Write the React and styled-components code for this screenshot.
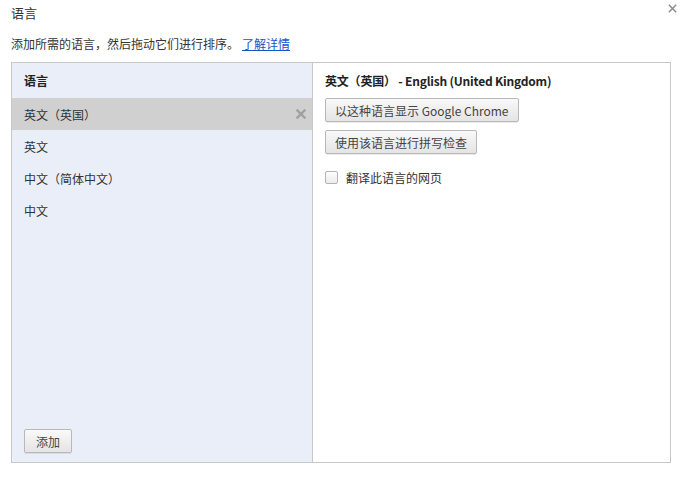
import React, { useState } from "react";
import styled, { createGlobalStyle } from "styled-components";

const GlobalStyle = createGlobalStyle`
  html, body {
    margin: 0;
    padding: 0;
    background: #ffffff;
  }
  body {
    font-family: "Noto Sans CJK SC", "Noto Sans", sans-serif;
    font-size: 12px;
    color: #333333;
  }
`;

const Page = styled.div`
  position: relative;
  width: 681px;
  height: 479px;
  box-sizing: border-box;
  padding: 0 11px;
`;

const Title = styled.div`
  font-size: 13px;
  line-height: 14px;
  padding-top: 6px;
  color: #333333;
`;

const CloseBtn = styled.div`
  position: absolute;
  top: -1px;
  right: 4px;
  width: 9px;
  height: 9px;
`;

const Desc = styled.div`
  margin-top: 17px;
  line-height: 14px;
  color: #333333;
`;

const Link = styled.a`
  color: #1155cc;
  text-decoration: underline;
  margin-left: 3px;
  cursor: pointer;
`;

const Box = styled.div`
  margin-top: 11px;
  width: 660px;
  height: 401px;
  box-sizing: border-box;
  border: 1px solid #c8c8c8;
  display: flex;
`;

const ListPane = styled.div`
  width: 301px;
  box-sizing: border-box;
  border-right: 1px solid #c8c8c8;
  background: #eaeef9;
  display: flex;
  flex-direction: column;
`;

const ListHead = styled.div`
  height: 35px;
  display: flex;
  align-items: center;
  padding-left: 12px;
  font-weight: bold;
  color: #222222;
`;

const Row = styled.div`
  height: 32px;
  display: flex;
  align-items: center;
  justify-content: space-between;
  padding: 0 6px 0 12px;
  background: ${(p) => (p.$selected ? "#d0d0d0" : "transparent")};
  color: #333333;
`;

const Remove = styled.span`
  width: 10px;
  height: 10px;
  display: flex;
`;

const Spacer = styled.div`
  flex: 1;
`;

const Button = styled.button`
  font-family: inherit;
  font-size: 12px;
  color: #444444;
  height: 24px;
  padding: 0 9px;
  border: 1px solid #b8b8b8;
  border-radius: 2px;
  background: linear-gradient(#f9f9f9, #e4e4e4);
  box-shadow: 0 1px 0 rgba(0, 0, 0, 0.08);
  cursor: pointer;
  align-self: flex-start;
`;

const AddButton = styled(Button)`
  margin: 0 0 9px 12px;
  width: 48px;
  padding: 0;
`;

const DetailPane = styled.div`
  flex: 1;
  display: flex;
  flex-direction: column;
  padding-left: 12px;
`;

const DetailHead = styled.div`
  height: 35px;
  display: flex;
  align-items: center;
  font-weight: bold;
  color: #222222;
  letter-spacing: -0.2px;
`;

const Actions = styled.div`
  display: flex;
  flex-direction: column;
  gap: 8px;
`;

const CheckRow = styled.label`
  margin-top: 15px;
  display: flex;
  align-items: center;
  gap: 8px;
  color: #333333;
`;

const Check = styled.span`
  width: 11px;
  height: 11px;
  border: 1px solid #b4b4b4;
  border-radius: 2px;
  background: linear-gradient(#fdfdfd, #ececec);
`;

const XIcon = ({ color, w }) => (
  <svg width="100%" height="100%" viewBox="0 0 10 10">
    <path d="M1.5 1.5 L8.5 8.5 M8.5 1.5 L1.5 8.5" stroke={color} strokeWidth={w} strokeLinecap="square" />
  </svg>
);

const languages = ["英文（英国）", "英文", "中文（简体中文）", "中文"];

export default function App() {
  const [selected, setSelected] = useState(0);

  return (
    <Page>
      <GlobalStyle />
      <Title>语言</Title>
      <CloseBtn>
        <XIcon color="#8a8a8a" w={1.6} />
      </CloseBtn>
      <Desc>
        添加所需的语言，然后拖动它们进行排序。
        <Link>了解详情</Link>
      </Desc>
      <Box>
        <ListPane>
          <ListHead>语言</ListHead>
          {languages.map((lang, i) => (
            <Row key={lang} $selected={i === selected} onClick={() => setSelected(i)}>
              {lang}
              {i === selected && (
                <Remove>
                  <XIcon color="#a0a0a0" w={2.4} />
                </Remove>
              )}
            </Row>
          ))}
          <Spacer />
          <AddButton>添加</AddButton>
        </ListPane>
        <DetailPane>
          <DetailHead>英文（英国） - English (United Kingdom)</DetailHead>
          <Actions>
            <Button>以这种语言显示 Google Chrome</Button>
            <Button>使用该语言进行拼写检查</Button>
          </Actions>
          <CheckRow>
            <Check />
            翻译此语言的网页
          </CheckRow>
        </DetailPane>
      </Box>
    </Page>
  );
}
